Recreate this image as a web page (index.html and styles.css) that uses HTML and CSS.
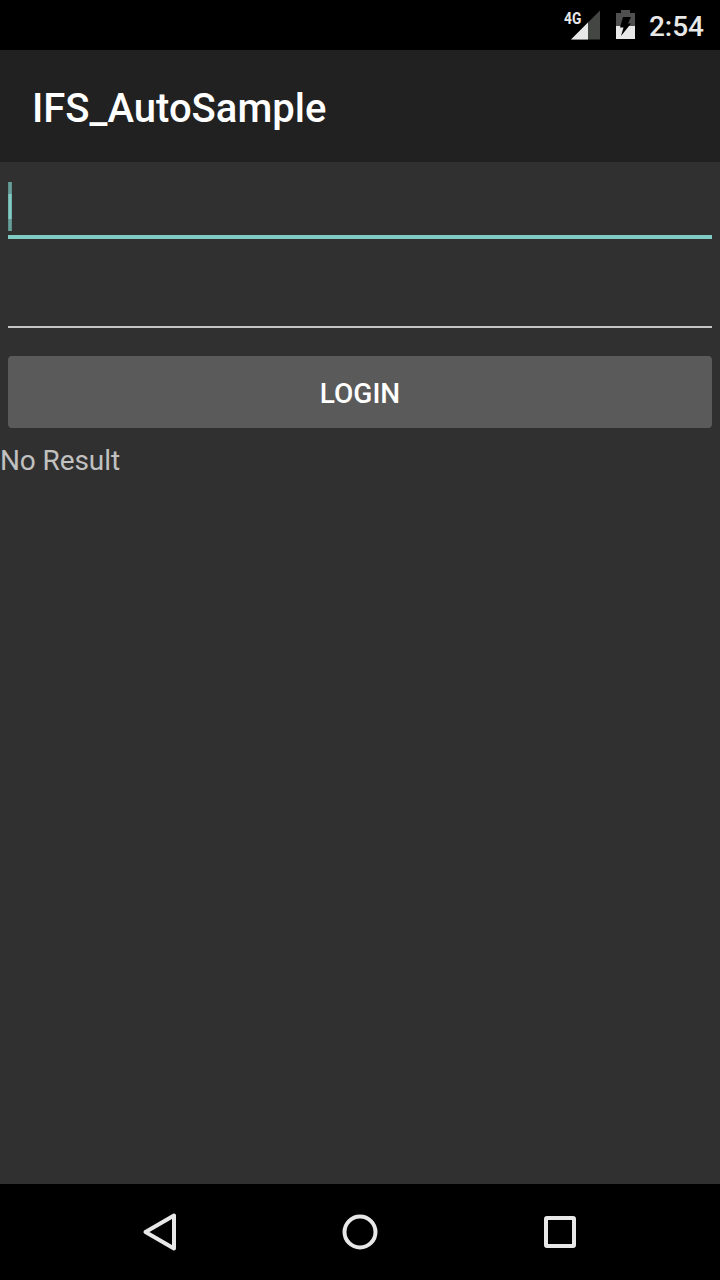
FILE: index.html
```html
<!DOCTYPE html>
<html lang="en">
<head>
<meta charset="utf-8">
<title>IFS_AutoSample</title>
<link rel="stylesheet" href="styles.css">
</head>
<body>
<div class="screen">
  <div class="status-bar">
    <div class="signal">
      <svg width="38" height="32" viewBox="0 0 38 32">
        <path d="M8 31.5L37 2.5V31.5Z" fill="#444644"/>
        <path d="M8 31.5L25 14.5V31.5Z" fill="#e8e8e8"/>
      </svg>
      <span class="network">4G</span>
    </div>
    <svg class="battery" width="19" height="29" viewBox="0 0 19 29">
      <path d="M5 0H14V3H19V16H0V3H5Z" fill="#505050"/>
      <path d="M0 16H19V29H0Z" fill="#e8e8e8"/>
      <path d="M7 7H15L12 13.5H15L5 26L7.5 17.5H4Z" fill="#000"/>
    </svg>
    <span class="clock">2:54</span>
  </div>
  <header class="app-bar"><h1 class="title">IFS_AutoSample</h1></header>
  <main class="content">
    <div class="field field-focused"><span class="cursor"></span></div>
    <div class="field"></div>
    <button class="login" type="button">LOGIN</button>
    <p class="result">No Result</p>
  </main>
  <nav class="nav-bar">
    <svg width="40" height="40" viewBox="0 0 40 40"><path d="M5.5 20L34 3.5V36.5Z"/></svg>
    <svg width="40" height="40" viewBox="0 0 40 40"><circle cx="20" cy="20" r="15.5"/></svg>
    <svg width="40" height="40" viewBox="0 0 40 40"><rect x="6" y="6" width="28" height="28" rx="1"/></svg>
  </nav>
</div>
</body>
</html>
```

FILE: styles.css
```css
* { box-sizing: border-box; }
body { margin: 0; background: #303030; font-family: Roboto, "Noto Sans", sans-serif; }
.screen { display: flex; flex-direction: column; width: 720px; height: 1280px; }
.status-bar { display: flex; justify-content: flex-end; align-items: flex-start; height: 50px; padding: 8px 16px 0 0; background: #000; color: #e8e8e8; }
.signal { position: relative; width: 38px; height: 32px; margin-right: 15px; }
.signal svg { display: block; }
.network { position: absolute; left: 1px; top: 2px; font-size: 17px; line-height: 17px; font-weight: 700; transform: scaleX(.81); transform-origin: left; }
.battery { display: block; margin: 2px 14px 0 0; }
.clock { padding-top: 1px; font-size: 28px; line-height: 36px; font-weight: 500; }
.app-bar { display: flex; align-items: center; height: 112px; padding: 6px 32px 0; background: #212121; }
.title { margin: 0; color: #fff; font-size: 40px; line-height: 48px; font-weight: 500; }
.content { flex: 1; display: flex; flex-direction: column; padding-top: 20px; }
.field { height: 89px; margin: 0 8px; border-bottom: 2px solid #c5c5c5; }
.field-focused { height: 57px; border-bottom: 4px solid #80cbc4; }
.cursor { display: block; width: 4px; height: 49px; background: linear-gradient(#669f9a 0 12px, #80cbc4 12px 37px, #669f9a 37px); box-shadow: inset 1px 0 rgba(48, 48, 48, .15), inset -1px 0 rgba(48, 48, 48, .15); }
.login { height: 72px; margin: 28px 8px 0; padding: 4px 0 0; border: 0; border-radius: 4px; background: #5a5a5a; color: #fff; font: 500 28px/36px Roboto, "Noto Sans", sans-serif; }
.result { margin: 14px 0 0; color: #c1c1c1; font-size: 28px; line-height: 38px; letter-spacing: -.1px; }
.nav-bar { display: flex; justify-content: center; align-items: center; gap: 160px; height: 96px; background: #000; }
.nav-bar svg { fill: none; stroke: #e8e8e8; stroke-width: 4; stroke-linejoin: round; }
```
